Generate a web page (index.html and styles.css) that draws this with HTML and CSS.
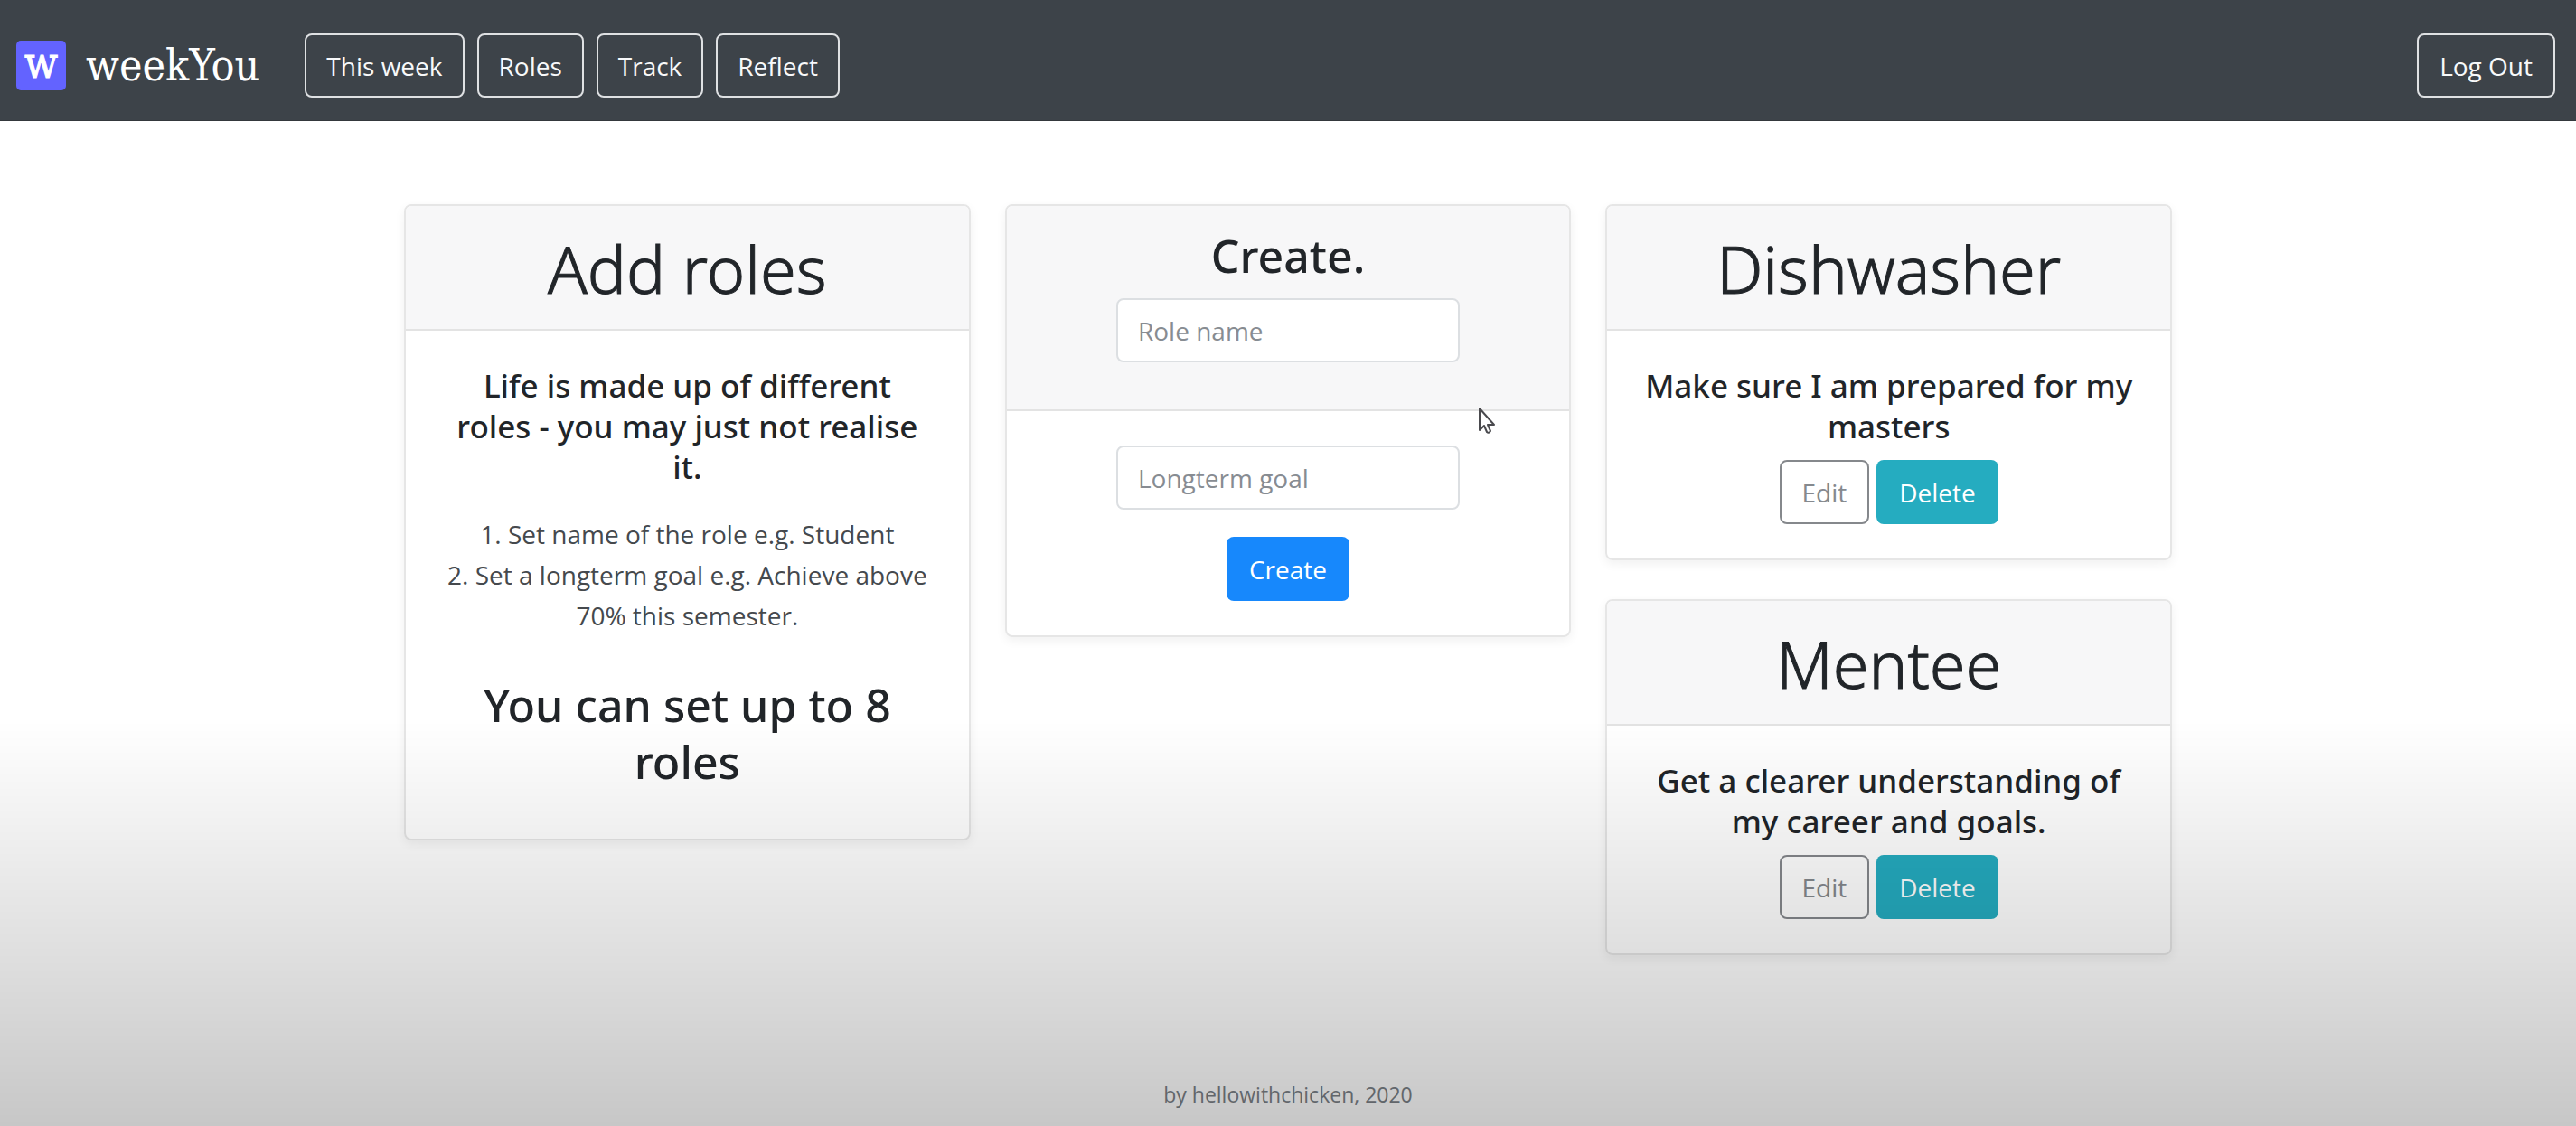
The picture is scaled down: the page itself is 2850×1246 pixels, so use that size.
FILE: index.html
```html
<!DOCTYPE html>
<html lang="en">
<head>
  <meta charset="utf-8">
  <meta name="viewport" content="width=device-width, initial-scale=1">
  <title>weekYou</title>
  <link rel="stylesheet" href="styles.css">
</head>
<body>
  <header class="navbar">
    <a class="brand" href="#"><span class="brand-mark">w</span><span class="brand-name">weekYou</span></a>
    <nav class="nav-links">
      <a class="btn btn-outline-light" href="#">This week</a>
      <a class="btn btn-outline-light" href="#">Roles</a>
      <a class="btn btn-outline-light" href="#">Track</a>
      <a class="btn btn-outline-light" href="#">Reflect</a>
    </nav>
    <button class="btn btn-outline-light logout" type="button">Log Out</button>
  </header>

  <main class="columns">
    <section class="card">
      <div class="card-header"><h1 class="title">Add roles</h1></div>
      <div class="card-body">
        <h2 class="lead">Life is made up of different<br>roles - you may just not realise<br>it.</h2>
        <ol class="steps">
          <li>Set name of the role e.g. Student</li>
          <li>Set a longterm goal e.g. Achieve above 70% this semester.</li>
        </ol>
        <h3 class="subtitle">You can set up to 8 roles</h3>
      </div>
    </section>

    <form class="card">
      <div class="card-header">
        <h2 class="subtitle">Create.</h2>
        <input class="field" type="text" placeholder="Role name" aria-label="Role name">
      </div>
      <div class="card-body">
        <input class="field" type="text" placeholder="Longterm goal" aria-label="Longterm goal">
        <button class="btn btn-primary" type="button">Create</button>
      </div>
    </form>

    <div class="role-list">
      <section class="card">
        <div class="card-header"><h2 class="title">Dishwasher</h2></div>
        <div class="card-body">
          <p class="lead">Make sure I am prepared for my masters</p>
          <div class="actions">
            <button class="btn btn-outline-secondary" type="button">Edit</button>
            <button class="btn btn-info" type="button">Delete</button>
          </div>
        </div>
      </section>
      <section class="card">
        <div class="card-header"><h2 class="title">Mentee</h2></div>
        <div class="card-body">
          <p class="lead">Get a clearer understanding of my career and goals.</p>
          <div class="actions">
            <button class="btn btn-outline-secondary" type="button">Edit</button>
            <button class="btn btn-info" type="button">Delete</button>
          </div>
        </div>
      </section>
    </div>
  </main>

  <footer class="footer">by hellowithchicken, 2020</footer>

  <div class="shade"></div>
  <svg class="pointer" width="20" height="31" viewBox="0 0 20 31" aria-hidden="true">
    <path d="M2 2V26L7 21L10 28Q12 30 14 27L11 20H18Z" fill="#fff" stroke="#4a4a4e" stroke-width="2" stroke-linejoin="round"/>
  </svg>
</body>
</html>
```
FILE: styles.css
```css
*,
*::before,
*::after {
  box-sizing: border-box;
}

body {
  margin: 0;
  min-height: 100vh;
  display: flex;
  flex-direction: column;
  background: #fff;
  color: #212529;
  font-family: "Open Sans", "Noto Sans", sans-serif;
  font-size: 28px;
  line-height: 45px;
}

h1,
h2,
h3,
p,
ol {
  margin: 0;
}

/* Navigation bar */
.navbar {
  display: flex;
  align-items: center;
  padding: 37px 23px 25px 18px;
  background: #3d4349;
  border-bottom: 1px solid #34383c;
}

.brand {
  display: flex;
  align-items: center;
  gap: 22px;
  color: #fff;
  text-decoration: none;
  font-family: "DejaVu Serif Condensed", "DejaVu Serif", serif;
  font-size: 48px;
}

.brand-mark {
  width: 55px;
  height: 55px;
  border-radius: 5px;
  background: #6363ff;
  line-height: 48px;
  text-align: center;
  -webkit-text-stroke: 1px currentColor;
}

.nav-links {
  display: flex;
  gap: 14px;
  margin-left: 50px;
}

.nav-links .btn {
  padding-inline: 22px;
}

.logout {
  margin-left: auto;
}

/* Buttons */
.btn {
  display: inline-block;
  padding: 12px 23px 10px;
  border: 2px solid transparent;
  border-radius: 8px;
  background: transparent;
  color: #fff;
  font: inherit;
  text-align: center;
  text-decoration: none;
}

.btn-outline-light {
  border-color: #dfe1e3;
  color: #f8f9fa;
}

.btn-outline-secondary {
  border-color: #85888c;
  color: #85898e;
}

.btn-primary {
  background: #1788fc;
}

.btn-info {
  background: #25acc0;
}

/* Cards */
.columns {
  display: grid;
  grid-template-columns: repeat(3, 1fr);
  align-items: start;
  gap: 38px;
  width: 100%;
  max-width: 1956px;
  margin: 92px auto 0;
}

.role-list {
  display: grid;
  gap: 43px;
}

.card {
  border: 2px solid #e6e6e6;
  border-radius: 8px;
  box-shadow: 0 4px 12px rgba(0, 0, 0, 0.06);
  text-align: center;
}

.card-header {
  padding: 24px 38px 22px;
  border-bottom: 2px solid #e3e3e3;
  border-radius: 6px 6px 0 0;
  background: #f7f7f8;
}

.card-body {
  padding: 38px;
}

.title {
  font-family: "Noto Sans", "Open Sans", sans-serif;
  font-size: 72px;
  font-weight: 300;
  line-height: 90px;
  -webkit-text-stroke: 1px currentColor;
}

.lead {
  margin-bottom: 15px;
  font-family: "Noto Sans", "Open Sans", sans-serif;
  font-size: 35px;
  font-weight: 500;
}

.subtitle {
  margin-bottom: 15px;
  font-family: "Noto Sans", "Open Sans", sans-serif;
  font-size: 50px;
  font-weight: 500;
  line-height: 63px;
}

.steps {
  margin: 30px 0 45px;
  padding: 0;
  list-style-position: inside;
  color: #45494d;
}

.field {
  display: block;
  width: 380px;
  max-width: 100%;
  margin: 0 auto 30px;
  padding: 12px 22px 10px;
  border: 2px solid #dcdfe2;
  border-radius: 8px;
  background: #fff;
  color: #495057;
  font: inherit;
}

.field::placeholder {
  color: #878c92;
  opacity: 1;
}

.actions {
  display: flex;
  justify-content: center;
  gap: 8px;
}

.footer {
  margin-top: auto;
  padding: 0 24px 12px;
  color: #7b8187;
  font-size: 23px;
  text-align: center;
}

/* Darkening towards the bottom of the window */
.shade {
  position: fixed;
  inset: 64% 0 0;
  background: linear-gradient(transparent, rgba(0, 0, 0, 0.22));
  pointer-events: none;
}

.pointer {
  position: absolute;
  top: 450px;
  left: 1635px;
  pointer-events: none;
}
```
